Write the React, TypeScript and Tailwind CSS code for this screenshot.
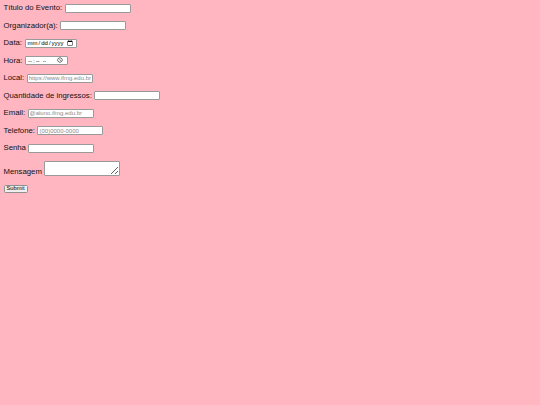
import React from 'react';

const field =
  'h-[9px] w-[66px] bg-white border border-[#9a9a9a] rounded-[1px] px-[1px] text-[6px] leading-none text-black placeholder:text-[#8a8a8a] outline-none';

function Row({ label, children }: { label: string; children: React.ReactNode }) {
  return (
    <div className="flex h-[9px] items-center gap-[2.5px]">
      <label className="whitespace-nowrap">{label}</label>
      {children}
    </div>
  );
}

export default function App() {
  return (
    <div
      className="min-h-screen w-full bg-[#ffb6c1] pl-[3.5px] pt-[3.5px] text-[7.75px] text-[#111]"
      style={{ fontFamily: '"Liberation Sans", Arial, sans-serif' }}
    >
      <form className="flex flex-col gap-[8.5px]" onSubmit={(e) => e.preventDefault()}>
        <Row label="Título do Evento:">
          <input type="text" className={field} />
        </Row>
        <Row label="Organizador(a):">
          <input type="text" className={field} />
        </Row>
        <Row label="Data:">
          <input type="date" className={`${field} !w-[52px] text-[5.5px]`} />
        </Row>
        <Row label="Hora:">
          <input type="time" className={`${field} !w-[43px] text-[5.5px]`} />
        </Row>
        <Row label="Local:">
          <input type="url" placeholder="https://www.ifmg.edu.br/" className={`${field} text-[5.3px]`} />
        </Row>
        <Row label="Quantidade de ingressos:">
          <input type="number" className={field} />
        </Row>
        <Row label="Email:">
          <input type="email" placeholder="@aluno.ifmg.edu.br" className={`${field} text-[5.3px]`} />
        </Row>
        <Row label="Telefone:">
          <input type="tel" placeholder="(00)0000-0000" className={`${field} text-[5.3px]`} />
        </Row>
        <Row label="Senha">
          <input type="password" className={field} />
        </Row>
        <div className="flex h-[15px] items-end gap-[2.5px]">
          <label className="leading-[9px]">Mensagem</label>
          <textarea className="block h-[15px] w-[76px] resize-y bg-white border border-[#9a9a9a] rounded-[1px] text-[6px] outline-none" />
        </div>
        <div className="flex">
          <button
            type="submit"
            className="block h-[8.5px] w-[24px] rounded-[1.5px] border border-[#8f8f8f] bg-[#efefef] p-0 text-[5.8px] leading-none text-black"
          >
            Submit
          </button>
        </div>
      </form>
    </div>
  );
}
